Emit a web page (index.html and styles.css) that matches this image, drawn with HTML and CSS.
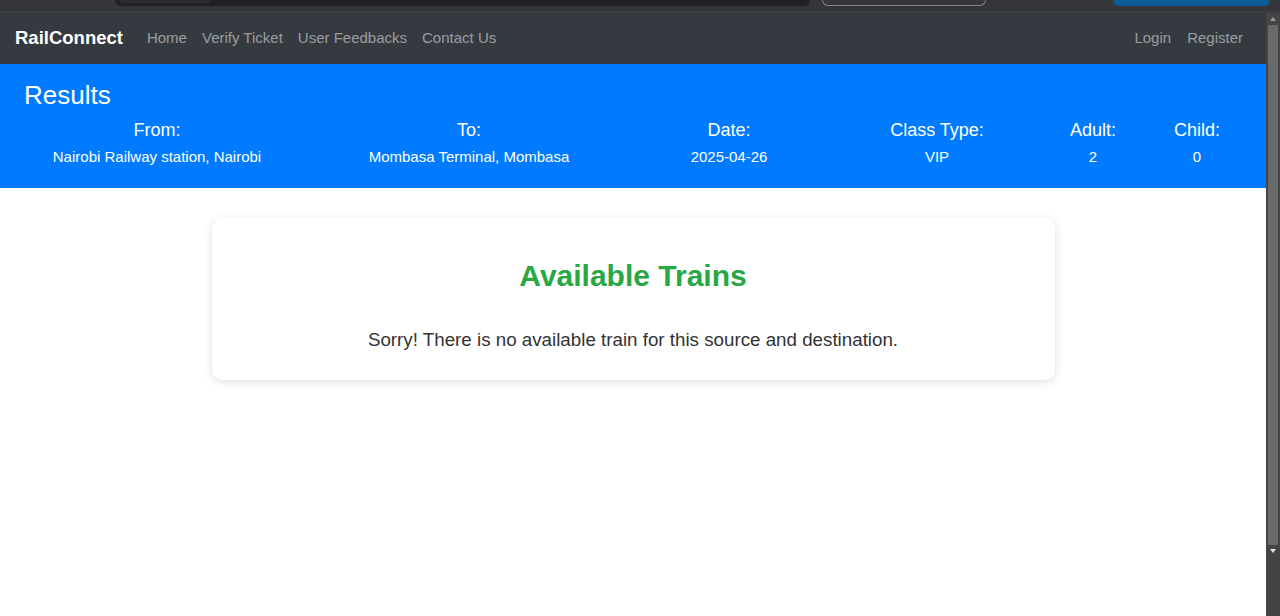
FILE: index.html
```html
<!DOCTYPE html>
<html lang="en">
<head>
<meta charset="utf-8">
<title>RailConnect - Results</title>
<link rel="stylesheet" href="styles.css">
</head>
<body>
<div class="chrome">
  <div class="chrome-bar"><span class="chrome-tab"></span></div>
  <div class="chrome-pill"></div>
  <div class="chrome-btn"></div>
</div>
<div class="frame">
  <div class="page">
    <nav class="navbar">
      <a class="brand" href="#">RailConnect</a>
      <ul class="nav-links">
        <li><a href="#">Home</a></li>
        <li><a href="#">Verify Ticket</a></li>
        <li><a href="#">User Feedbacks</a></li>
        <li><a href="#">Contact Us</a></li>
      </ul>
      <ul class="nav-links nav-right">
        <li><a href="#">Login</a></li>
        <li><a href="#">Register</a></li>
      </ul>
    </nav>
    <section class="results">
      <h1 class="results-title">Results</h1>
      <div class="results-grid">
        <div class="cell"><div class="label">From:</div><div class="value">Nairobi Railway station, Nairobi</div></div>
        <div class="cell"><div class="label">To:</div><div class="value">Mombasa Terminal, Mombasa</div></div>
        <div class="cell"><div class="label">Date:</div><div class="value">2025-04-26</div></div>
        <div class="cell"><div class="label">Class Type:</div><div class="value">VIP</div></div>
        <div class="cell"><div class="label">Adult:</div><div class="value">2</div></div>
        <div class="cell"><div class="label">Child:</div><div class="value">0</div></div>
      </div>
    </section>
    <main class="content">
      <div class="card">
        <h2 class="card-title">Available Trains</h2>
        <p class="card-text">Sorry! There is no available train for this source and destination.</p>
      </div>
    </main>
  </div>
  <div class="scrollbar">
    <span class="arrow up"></span>
    <span class="thumb"></span>
    <span class="arrow down"></span>
  </div>
</div>
</body>
</html>
```

FILE: styles.css
```css
* { box-sizing: border-box; }
html, body { margin: 0; padding: 0; }
body {
  font-family: "Liberation Sans", Arial, sans-serif;
  background: #ffffff;
  width: 1280px;
  height: 616px;
  overflow: hidden;
}
ul { list-style: none; margin: 0; padding: 0; }
a { text-decoration: none; }

.chrome {
  height: 13px;
  background: #35363a;
  border-bottom: 2px solid #3d3e42;
  display: flex;
  align-items: flex-start;
}
.chrome-bar {
  margin-left: 115px;
  width: 695px;
  height: 6px;
  background: #202124;
  border-radius: 0 0 8px 8px;
  padding-left: 5px;
}
.chrome-tab {
  display: block;
  width: 90px;
  height: 3px;
  background: #2c2d30;
  border-radius: 0 0 3px 3px;
}
.chrome-pill {
  margin-left: 12px;
  width: 164px;
  height: 6px;
  border: 1px solid #808185;
  border-top: none;
  border-radius: 0 0 8px 8px;
}
.chrome-btn {
  margin-left: 127px;
  width: 157px;
  height: 6px;
  background: #0b5c96;
  border-radius: 0 0 8px 8px;
}

.frame {
  display: flex;
  height: 603px;
}
.page {
  width: 1266px;
  flex: none;
}
.scrollbar {
  width: 14px;
  flex: none;
  background: #444444;
  display: flex;
  flex-direction: column;
  align-items: center;
  padding: 4px 0 4px;
}
.arrow {
  width: 0; height: 0;
  border-left: 3px solid transparent;
  border-right: 3px solid transparent;
}
.arrow.up { border-bottom: 4px solid #9a9a9a; }
.arrow.down { border-top: 4px solid #e6e6e6; }
.thumb {
  width: 10px;
  margin: 4px 0;
  height: 520px;
  background: #6a6a6a;
  border-radius: 1px;
}

.navbar {
  height: 51px;
  background: #343a40;
  display: flex;
  align-items: center;
  padding: 0 23px 2px 15px;
}
.brand {
  color: #ffffff;
  font-weight: bold;
  font-size: 18.5px;
  margin-right: 24px;
}
.nav-links {
  display: flex;
  gap: 15px;
}
.nav-links a {
  color: rgba(255, 255, 255, 0.5);
  font-size: 15px;
}
.nav-right {
  margin-left: auto;
  gap: 16px;
}

.results {
  background: #007bff;
  color: #ffffff;
  height: 124px;
  padding: 16px 17px 0 1px;
}
.results-title {
  font-size: 26px;
  font-weight: normal;
  margin: 0 0 9px 23px;
  line-height: 30px;
}
.results-grid {
  display: grid;
  grid-template-columns: 3fr 3fr 2fr 2fr 1fr 1fr;
  text-align: center;
}
.label {
  font-size: 18px;
  line-height: 22px;
}
.value {
  font-size: 15px;
  line-height: 18px;
  margin-top: 7px;
}

.content {
  padding-top: 30px;
}
.card {
  width: 843px;
  height: 162px;
  margin: 0 auto;
  background: #ffffff;
  border-radius: 10px;
  box-shadow: 0 2px 10px rgba(0, 0, 0, 0.12);
  text-align: center;
  padding-top: 40px;
}
.card-title {
  color: #28a745;
  font-size: 30px;
  font-weight: bold;
  line-height: 36px;
  margin: 0;
}
.card-text {
  color: #333333;
  font-size: 18.75px;
  line-height: 22px;
  margin: 35px 0 0;
}
```
